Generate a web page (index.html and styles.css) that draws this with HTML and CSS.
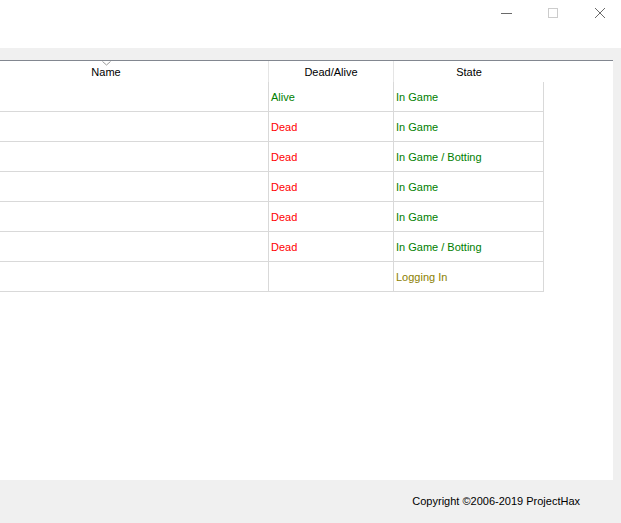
FILE: index.html
```html
<!DOCTYPE html>
<html>
<head>
<meta charset="utf-8">
<link rel="stylesheet" href="styles.css">
</head>
<body>
<div class="window">
  <div class="titlebar">
    <span class="ctl ctl-min"><svg width="12" height="12" viewBox="0 0 12 12"><line x1="0" y1="6.5" x2="11" y2="6.5" stroke="#6a6a6a" stroke-width="1"/></svg></span>
    <span class="ctl ctl-max"><svg width="12" height="12" viewBox="0 0 12 12"><rect x="1.5" y="1.5" width="9" height="9" fill="none" stroke="#cccccc" stroke-width="1"/></svg></span>
    <span class="ctl ctl-close"><svg width="12" height="12" viewBox="0 0 12 12"><path d="M1 1 L11 11 M11 1 L1 11" stroke="#6a6a6a" stroke-width="1"/></svg></span>
  </div>
  <div class="band"></div>
  <div class="middle">
    <div class="panel">
      <div class="grid">
        <div class="hcell hname"><span class="sort"><svg width="9" height="5" viewBox="0 0 9 5"><path d="M0.5 0.5 L4.5 4 L8.5 0.5" fill="none" stroke="#9a9a9a" stroke-width="1"/></svg></span>Name</div>
        <div class="hcell hdead">Dead/Alive</div>
        <div class="hcell hstate">State</div>

        <div class="cell c1"></div><div class="cell c2 green">Alive</div><div class="cell c3 green">In Game</div>
        <div class="cell c1"></div><div class="cell c2 red">Dead</div><div class="cell c3 green">In Game</div>
        <div class="cell c1"></div><div class="cell c2 red">Dead</div><div class="cell c3 green">In Game / Botting</div>
        <div class="cell c1"></div><div class="cell c2 red">Dead</div><div class="cell c3 green">In Game</div>
        <div class="cell c1"></div><div class="cell c2 red">Dead</div><div class="cell c3 green">In Game</div>
        <div class="cell c1"></div><div class="cell c2 red">Dead</div><div class="cell c3 green">In Game / Botting</div>
        <div class="cell c1"></div><div class="cell c2"></div><div class="cell c3 olive">Logging In</div>
      </div>
    </div>
    <div class="strip"></div>
  </div>
  <div class="footer">Copyright ©2006-2019 ProjectHax</div>
</div>
</body>
</html>
```
FILE: styles.css
```css
html, body {
  margin: 0;
  padding: 0;
  background: #f0f0f0;
}
body {
  font-family: "Liberation Sans", Arial, sans-serif;
  font-size: 11px;
  color: #000;
}
.window {
  width: 621px;
  height: 523px;
  display: flex;
  flex-direction: column;
  overflow: hidden;
}
.titlebar {
  height: 48px;
  background: #ffffff;
  display: flex;
  align-items: flex-start;
  justify-content: flex-end;
}
.ctl {
  display: flex;
  width: 12px;
  height: 12px;
  margin-top: 7px;
}
.ctl-min { margin-right: 34px; }
.ctl-max { margin-right: 35px; }
.ctl-close { margin-right: 15px; }
.band {
  height: 12px;
  background: #f0f0f0;
}
.middle {
  display: flex;
  height: 420px;
}
.panel {
  width: 613px;
  background: #ffffff;
  border-top: 1px solid #828790;
  box-sizing: border-box;
}
.strip {
  flex: 1;
  background: #f0f0f0;
}
.grid {
  display: grid;
  grid-template-columns: 269px 125px 150px;
  grid-auto-rows: 30px;
  grid-template-rows: 21px;
}
.hcell {
  position: relative;
  display: flex;
  align-items: center;
  justify-content: center;
  line-height: 1;
  padding-top: 2px;
  box-sizing: border-box;
}
.hname {
  padding-right: 56px;
  border-right: 1px solid #e5e5e5;
}
.hdead {
  border-right: 1px solid #e5e5e5;
}
.sort {
  position: absolute;
  left: 102px;
  top: 0;
  display: flex;
}
.cell {
  display: flex;
  align-items: center;
  padding-left: 2px;
  padding-top: 1px;
  border-bottom: 1px solid #d9d9d9;
  border-right: 1px solid #d9d9d9;
  box-sizing: border-box;
}
.green { color: #008000; }
.red { color: #ff0000; }
.olive { color: #8b8000; }
.footer {
  flex: 1;
  display: flex;
  align-items: center;
  justify-content: flex-end;
  padding-right: 41px;
  padding-bottom: 2px;
  box-sizing: border-box;
}
```
